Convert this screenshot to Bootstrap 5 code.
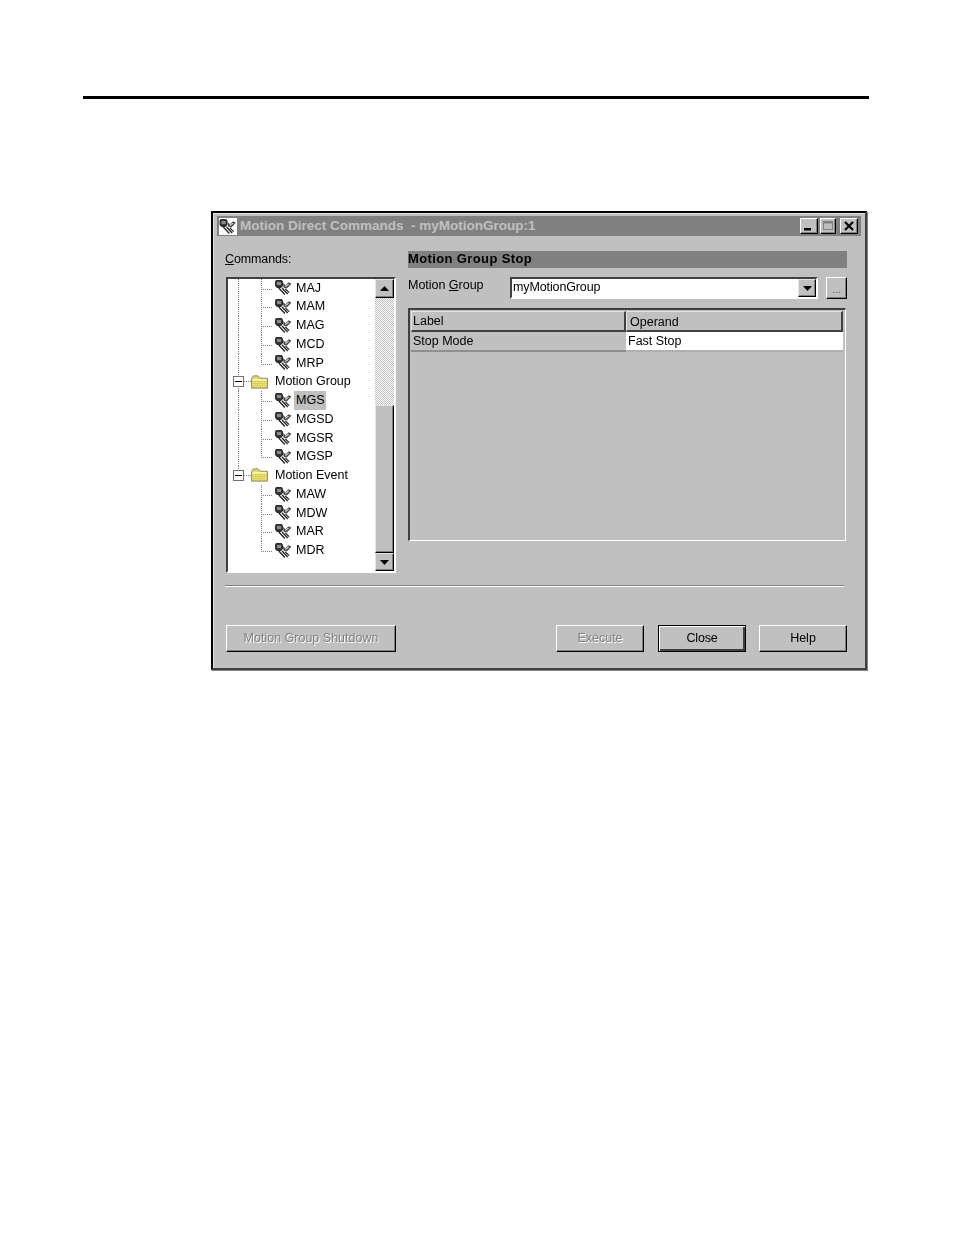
<!DOCTYPE html>
<html lang="en">
<head>
<meta charset="utf-8">
<title>Motion Direct Commands</title>
<link href="https://cdn.jsdelivr.net/npm/bootstrap@5.3.0/dist/css/bootstrap.min.css" rel="stylesheet">
<style>
html,body{height:100%}
body{background:#fff;color:#000;font-family:"Liberation Sans",Arial,sans-serif;font-size:12.5px;line-height:1;padding-top:96px;overflow:hidden}
.page-rule{height:3px;width:786px;margin-left:83px;background:#000}
.dlg{width:656px;height:459px;margin:112px 0 0 211px;background:#c0c0c0;border:2px solid;border-color:#000 #404040 #404040 #000;box-shadow:1px 1px 0 #808080,inset 1px 1px 0 #e4e4e4;padding:3px 4px 0;filter:blur(.35px)}
.ttl{height:20px;background:#808080;color:#c0c0c0;font-weight:700;font-size:13.5px;white-space:pre;padding:0 3px 0 1px}
.ttl-ico{width:19px;height:18px;background:#fff;margin-right:3px;box-shadow:inset 1px 1px 0 #808080}
.ctl{height:16px;background:#c0c0c0;border:1px solid;border-color:#fff #000 #000 #fff;box-shadow:inset -1px -1px 0 #808080}
.ctl svg{display:block}
.ctl-min{width:18px}
.ctl-max{width:16px;margin-left:2px}
.ctl-cls{width:18px;margin-left:4px}
.dbody{padding:15px 14px 0 8px}
.lcol{width:171px}
.rcol{width:439px;margin-left:12px}
.cmd-lbl{height:26px;padding-top:2px;letter-spacing:-.12px}
.tree-box{margin-left:1px;width:170px;height:296px;border:2px solid;border-color:#404040 #fff #fff #404040;background:#fff}
.tree{width:147px;overflow:hidden}
.tree-in{margin-top:-.5px}
.tr{position:relative;height:18.75px;padding-left:46px;white-space:nowrap}
.tr .nm{margin-left:2px;padding:2px;line-height:14.7px}
.tr .nm.sel{background:#c0c0c0}
.tr svg{flex:none}
.leaf::before,.leaf::after{content:"";position:absolute;left:33px;width:1px;background:repeating-linear-gradient(#808080 0 1px,transparent 1px 2px)}
.leaf::before{top:0;height:10px}
.leaf::after{top:10px;height:9px}
.leaf.last::after{display:none}
.stem{position:absolute;left:33px;top:10px;width:12px;height:1px;background:repeating-linear-gradient(90deg,#808080 0 1px,transparent 1px 2px)}
.guide{position:absolute;left:10px;top:0;bottom:0;width:1px;background:repeating-linear-gradient(#808080 0 1px,transparent 1px 2px)}
.fold{padding-left:5px}
.tr.fold .nm{margin-left:7px;padding:0}
.fold .guide.up{bottom:auto;height:4px}
.fold .guide.down{top:14px}
.xpd{width:11px;height:11px;background:#fff;border:1px solid #707070;flex:none}
.xpd i{display:block;width:7px;height:1px;background:#000;margin:4px 1px}
.dash{width:7px;height:1px;flex:none;background:repeating-linear-gradient(90deg,#808080 0 1px,transparent 1px 2px)}
.sb{width:19px}
.sb-btn{height:19px;background:#c0c0c0;border:1px solid;border-color:#e4e4e4 #000 #000 #e4e4e4;box-shadow:inset -1px -1px 0 #808080;flex:none}
.sb-btn.dn{height:18px}
.sb-track{height:107px;background:repeating-conic-gradient(#c0c0c0 0 25%,#fff 0 50%) 0 0/2px 2px;flex:none}
.sb-thumb{height:148px;background:#c0c0c0;border:1px solid;border-color:#e4e4e4 #000 #000 #e4e4e4;box-shadow:inset -1px -1px 0 #808080;flex:none}
.sec{height:17px;background:#808080;font-weight:700;font-size:13px;letter-spacing:.38px;line-height:16px;margin-bottom:9px;white-space:nowrap}
.mg-row{height:22px;margin-bottom:9px}
.mg-lbl{width:102px;padding-top:2px;letter-spacing:-.02px}
.combo{width:308px;height:22px;border:2px solid;border-color:#404040 #fff #fff #404040;background:#fff;padding-left:1px;letter-spacing:-.12px}
.combo-txt{margin-top:-1px}
.combo-arrow{width:18px;height:18px;margin-left:auto;background:#c0c0c0;border:1px solid;border-color:#e4e4e4 #000 #000 #e4e4e4;box-shadow:inset -1px -1px 0 #808080}
.more{width:21px;height:22px;margin-left:8px;background:#c0c0c0;border:1px solid;border-color:#fff #000 #000 #fff;box-shadow:inset -1px -1px 0 #808080;color:#555;font-size:11px;padding:6px 0 0}
.gridbox{width:438px;height:233px;border:solid;border-width:2px 1px 1px 2px;border-color:#404040 #fff #fff #404040;padding:1px}
.gtbl{table-layout:fixed;width:432px;border-collapse:separate;border-spacing:0}
.gtbl th,.gtbl td{font-weight:400;padding:0;white-space:nowrap;overflow:hidden}
.gtbl th{height:21px;border:1px solid;border-width:1px 2px 2px 1px;border-color:#e4e4e4 #404040 #404040 #e4e4e4;padding-left:1px;padding-top:1px}
.gtbl th + th{padding-left:3px;padding-top:2px}
.gtbl td{height:20px;border-bottom:2px solid #8f8f8f;padding-left:2px}
.gtbl td.val{background:#fff;border-bottom-color:#b0b0b0;padding-left:2px}
.c-a{width:215px}
.sepr{height:2px;margin:12px 3px 0 0;background:#808080;border-bottom:1px solid #fff}
.foot{margin-top:38px;height:27px}
.wbtn.btn{--bs-btn-padding-x:0;--bs-btn-padding-y:0;--bs-btn-font-size:12.5px;--bs-btn-line-height:1;width:88px;height:27px;background:#c0c0c0;color:#000;border:1px solid;border-color:#fff #000 #000 #fff;border-radius:0;box-shadow:inset -1px -1px 0 #808080;font-family:inherit}
.wbtn.btn:disabled{opacity:1;color:#808080;background:#c0c0c0;border-color:#fff #000 #000 #fff;text-shadow:.8px .8px 0 #fff}
.wbtn.sd{width:170px;margin-left:1px}
.wbtn.dft.btn{border:1px solid #000;box-shadow:inset 1px 1px 0 #fff,inset -2px -2px 0 #404040;margin-left:14px;letter-spacing:-.2px}
.wbtn.hlp{margin-left:13px}
</style>
</head>
<body>
<svg width="0" height="0" class="d-block" aria-hidden="true">
  <defs>
    <symbol id="mo" viewBox="0 0 18 16">
      <path fill="#2e2e2e" d="M.5 1.500 1.500 0h6L9 1.500V6L7 8.500H2.500L.5 6.500z"/>
      <rect x="2.500" y="2" width="4.500" height="3.500" fill="#8c8c8c"/>
      <path fill="#4a4a4a" d="M9 3l2.500 2.500L15 2.500 18 4l-5 5-3.500-1z"/>
      <path fill="#d8d8d8" d="M11 6.500l3.500-2.500 1 .5-3.500 3z"/>
      <path fill="none" stroke="#222" stroke-width="1.400" d="M4.500 8.500l6.500 7M8 8.500l6 6.500M11.500 9.500l4 4"/>
    </symbol>
    <pattern id="dth" width="2" height="2" patternUnits="userSpaceOnUse">
      <rect width="2" height="2" fill="#e8e06c"/><rect width="1" height="1" fill="#c8c060"/>
    </pattern>
    <symbol id="fd" viewBox="0 0 18 14">
      <path fill="url(#dth)" stroke="#8a8a5a" d="M.5 3.500 2.500 .5h5l2 2.500h8v10.500H.5z"/>
      <path fill="#fdfac0" d="M1.500 4h15v1.500h-15z"/>
    </symbol>
    <symbol id="up" viewBox="0 0 9 5"><path d="M4.500 0 9 5H0z"/></symbol>
    <symbol id="dn" viewBox="0 0 9 5"><path d="M0 0h9L4.500 5z"/></symbol>
  </defs>
</svg>
<div class="page-rule"></div>
<div class="dlg">
  <div class="ttl d-flex align-items-center">
    <span class="ttl-ico d-flex align-items-center justify-content-center"><svg width="17" height="15"><use href="#mo"/></svg></span>
    <span class="flex-grow-1">Motion Direct Commands  - myMotionGroup:1</span>
    <span class="ctl ctl-min d-block"><svg width="16" height="14"><rect x="3" y="9" width="7" height="2.500"/></svg></span>
    <span class="ctl ctl-max d-block"><svg width="14" height="14"><rect x="2.500" y="2.500" width="9" height="8" fill="none" stroke="#808080"/><rect x="3" y="3" width="8" height="1.500" fill="#808080"/></svg></span>
    <span class="ctl ctl-cls d-block"><svg width="16" height="14"><path d="M4 3l8 8M12 3l-8 8" stroke="#000" stroke-width="2.200"/></svg></span>
  </div>
  <div class="dbody">
    <div class="d-flex">
      <div class="lcol">
        <div class="cmd-lbl"><u>C</u>ommands:</div>
        <div class="tree-box d-flex">
          <div class="tree"><div class="tree-in">
            <div class="tr leaf d-flex align-items-center"><i class="guide"></i><i class="stem"></i><svg width="18" height="15"><use href="#mo"/></svg><span class="nm">MAJ</span></div>
            <div class="tr leaf d-flex align-items-center"><i class="guide"></i><i class="stem"></i><svg width="18" height="15"><use href="#mo"/></svg><span class="nm">MAM</span></div>
            <div class="tr leaf d-flex align-items-center"><i class="guide"></i><i class="stem"></i><svg width="18" height="15"><use href="#mo"/></svg><span class="nm">MAG</span></div>
            <div class="tr leaf d-flex align-items-center"><i class="guide"></i><i class="stem"></i><svg width="18" height="15"><use href="#mo"/></svg><span class="nm">MCD</span></div>
            <div class="tr leaf last d-flex align-items-center"><i class="guide"></i><i class="stem"></i><svg width="18" height="15"><use href="#mo"/></svg><span class="nm">MRP</span></div>
            <div class="tr fold d-flex align-items-center"><i class="guide up"></i><i class="guide down"></i><span class="xpd"><i></i></span><span class="dash"></span><svg width="17" height="14"><use href="#fd"/></svg><span class="nm">Motion Group</span></div>
            <div class="tr leaf d-flex align-items-center"><i class="guide"></i><i class="stem"></i><svg width="18" height="15"><use href="#mo"/></svg><span class="nm sel">MGS</span></div>
            <div class="tr leaf d-flex align-items-center"><i class="guide"></i><i class="stem"></i><svg width="18" height="15"><use href="#mo"/></svg><span class="nm">MGSD</span></div>
            <div class="tr leaf d-flex align-items-center"><i class="guide"></i><i class="stem"></i><svg width="18" height="15"><use href="#mo"/></svg><span class="nm">MGSR</span></div>
            <div class="tr leaf last d-flex align-items-center"><i class="guide"></i><i class="stem"></i><svg width="18" height="15"><use href="#mo"/></svg><span class="nm">MGSP</span></div>
            <div class="tr fold d-flex align-items-center"><i class="guide up"></i><span class="xpd"><i></i></span><span class="dash"></span><svg width="17" height="14"><use href="#fd"/></svg><span class="nm">Motion Event</span></div>
            <div class="tr leaf d-flex align-items-center"><i class="stem"></i><svg width="18" height="15"><use href="#mo"/></svg><span class="nm">MAW</span></div>
            <div class="tr leaf d-flex align-items-center"><i class="stem"></i><svg width="18" height="15"><use href="#mo"/></svg><span class="nm">MDW</span></div>
            <div class="tr leaf d-flex align-items-center"><i class="stem"></i><svg width="18" height="15"><use href="#mo"/></svg><span class="nm">MAR</span></div>
            <div class="tr leaf last d-flex align-items-center"><i class="stem"></i><svg width="18" height="15"><use href="#mo"/></svg><span class="nm">MDR</span></div>
          </div></div>
          <div class="sb d-flex flex-column">
            <div class="sb-btn d-flex align-items-center justify-content-center"><svg width="9" height="5"><use href="#up"/></svg></div>
            <div class="sb-track"></div>
            <div class="sb-thumb"></div>
            <div class="sb-btn dn d-flex align-items-center justify-content-center"><svg width="9" height="5"><use href="#dn"/></svg></div>
          </div>
        </div>
      </div>
      <div class="rcol">
        <div class="sec">Motion Group Stop</div>
        <div class="mg-row d-flex">
          <div class="mg-lbl">Motion <u>G</u>roup</div>
          <div class="combo d-flex align-items-center"><span class="combo-txt">myMotionGroup</span><span class="combo-arrow d-flex align-items-center justify-content-center"><svg width="9" height="5"><use href="#dn"/></svg></span></div>
          <div class="more text-center">...</div>
        </div>
        <div class="gridbox">
          <table class="gtbl">
            <thead><tr><th class="c-a">Label</th><th>Operand</th></tr></thead>
            <tbody><tr><td>Stop Mode</td><td class="val">Fast Stop</td></tr></tbody>
          </table>
        </div>
      </div>
    </div>
    <div class="sepr"></div>
    <div class="foot d-flex">
      <button type="button" class="btn wbtn sd" disabled>Motion Group Shutdown</button>
      <button type="button" class="btn wbtn ms-auto" disabled>Execute</button>
      <button type="button" class="btn wbtn dft">Close</button>
      <button type="button" class="btn wbtn hlp">Help</button>
    </div>
  </div>
</div>
<script src="https://cdn.jsdelivr.net/npm/bootstrap@5.3.0/dist/js/bootstrap.bundle.min.js"></script>
</body>
</html>
